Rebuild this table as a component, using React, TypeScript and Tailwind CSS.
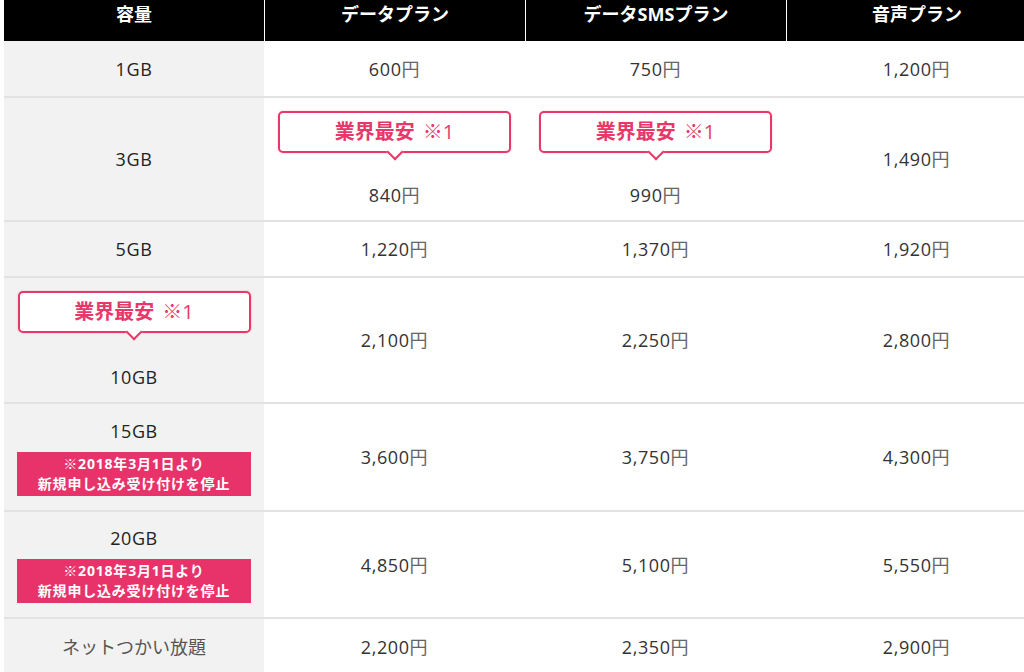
import React from "react";

type Cell = {
    price?: string;
    label?: string;
    badge?: boolean;
    notice?: boolean;
};

type Row = {
    h: string;
    cap: Cell;
    cells: Cell[];
};

const rows: Row[] = [
    { h: "h-[57px]", cap: { label: "1GB" }, cells: [{ price: "600" }, { price: "750" }, { price: "1,200" }] },
    { h: "h-[124px]", cap: { label: "3GB" }, cells: [{ price: "840", badge: true }, { price: "990", badge: true }, { price: "1,490" }] },
    { h: "h-[56px]", cap: { label: "5GB" }, cells: [{ price: "1,220" }, { price: "1,370" }, { price: "1,920" }] },
    { h: "h-[126px]", cap: { label: "10GB", badge: true }, cells: [{ price: "2,100" }, { price: "2,250" }, { price: "2,800" }] },
    { h: "h-[108px]", cap: { label: "15GB", notice: true }, cells: [{ price: "3,600" }, { price: "3,750" }, { price: "4,300" }] },
    { h: "h-[107px]", cap: { label: "20GB", notice: true }, cells: [{ price: "4,850" }, { price: "5,100" }, { price: "5,550" }] },
];

function Badge() {
    return (
        <div className="relative w-[233px] h-[42px] bg-white border-2 border-[#e8386a] rounded-[5px] flex items-center justify-center text-[#e8386a] shadow-[0_0_2px_rgba(232,56,106,0.35)]">
            <span className="text-[20px] font-bold leading-none">業界最安</span>
            <span className="text-[20px] leading-none ml-2">※1</span>
            <span className="absolute left-1/2 -bottom-[7px] -ml-[6px] w-3 h-3 rotate-45 bg-white border-r-2 border-b-2 border-[#e8386a]" />
        </div>
    );
}

function Notice() {
    return (
        <div className="w-[234px] mt-[9px] py-[2px] bg-[#e8336a] text-white text-[14px] font-bold leading-[20px] tracking-[0.8px] text-center">
            ※2018年3月1日より
            <br />
            新規申し込み受け付けを停止
        </div>
    );
}

function Price({ value }: { value: string }) {
    return (
        <span className="text-[18px] leading-[24px] text-[#333] tracking-[0.6px]">
            {value}
            <span className="text-[#666]">円</span>
        </span>
    );
}

export default function App() {
    const heads = ["容量", "データプラン", "データSMSプラン", "音声プラン"];
    return (
        <div
            className="w-[1024px] h-[672px] overflow-hidden bg-white pl-[4px]"
            style={{ fontFamily: '"Open Sans", "Noto Sans CJK JP", sans-serif' }}
        >
            <div className="w-[1042px]">
                <div className="grid grid-cols-[260px_261px_261px_261px] h-[41px] bg-black">
                    {heads.map((h, i) => (
                        <div
                            key={h}
                            className={`flex justify-center pt-[3px] text-white text-[18px] font-bold leading-[22px] ${i > 0 ? "border-l border-white" : ""}`}
                        >
                            {h}
                        </div>
                    ))}
                </div>

                {rows.map((r, ri) => (
                    <div
                        key={ri}
                        className={`grid grid-cols-[260px_261px_261px_261px] border-b-2 border-[#e2e2e2] ${r.h}`}
                    >
                        <div className="bg-[#f2f2f2] flex flex-col items-center justify-center">
                            {r.cap.badge && (
                                <div className="mb-[32px]">
                                    <Badge />
                                </div>
                            )}
                            <span className="text-[18px] leading-[24px] text-[#222] tracking-[0.6px]">{r.cap.label}</span>
                            {r.cap.notice && <Notice />}
                        </div>
                        {r.cells.map((c, ci) => (
                            <div key={ci} className="flex flex-col items-center justify-center">
                                {c.badge && (
                                    <div className="mb-[30px]">
                                        <Badge />
                                    </div>
                                )}
                                <Price value={c.price || ""} />
                            </div>
                        ))}
                    </div>
                ))}

                <div className="grid grid-cols-[260px_261px_261px_261px] h-[56px]">
                    <div className="bg-[#f2f2f2] flex items-center justify-center">
                        <span className="text-[18px] leading-[24px] text-[#555]">ネットつかい放題</span>
                    </div>
                    <div className="flex items-center justify-center">
                        <Price value="2,200" />
                    </div>
                    <div className="flex items-center justify-center">
                        <Price value="2,350" />
                    </div>
                    <div className="flex items-center justify-center">
                        <Price value="2,900" />
                    </div>
                </div>
            </div>
        </div>
    );
}
